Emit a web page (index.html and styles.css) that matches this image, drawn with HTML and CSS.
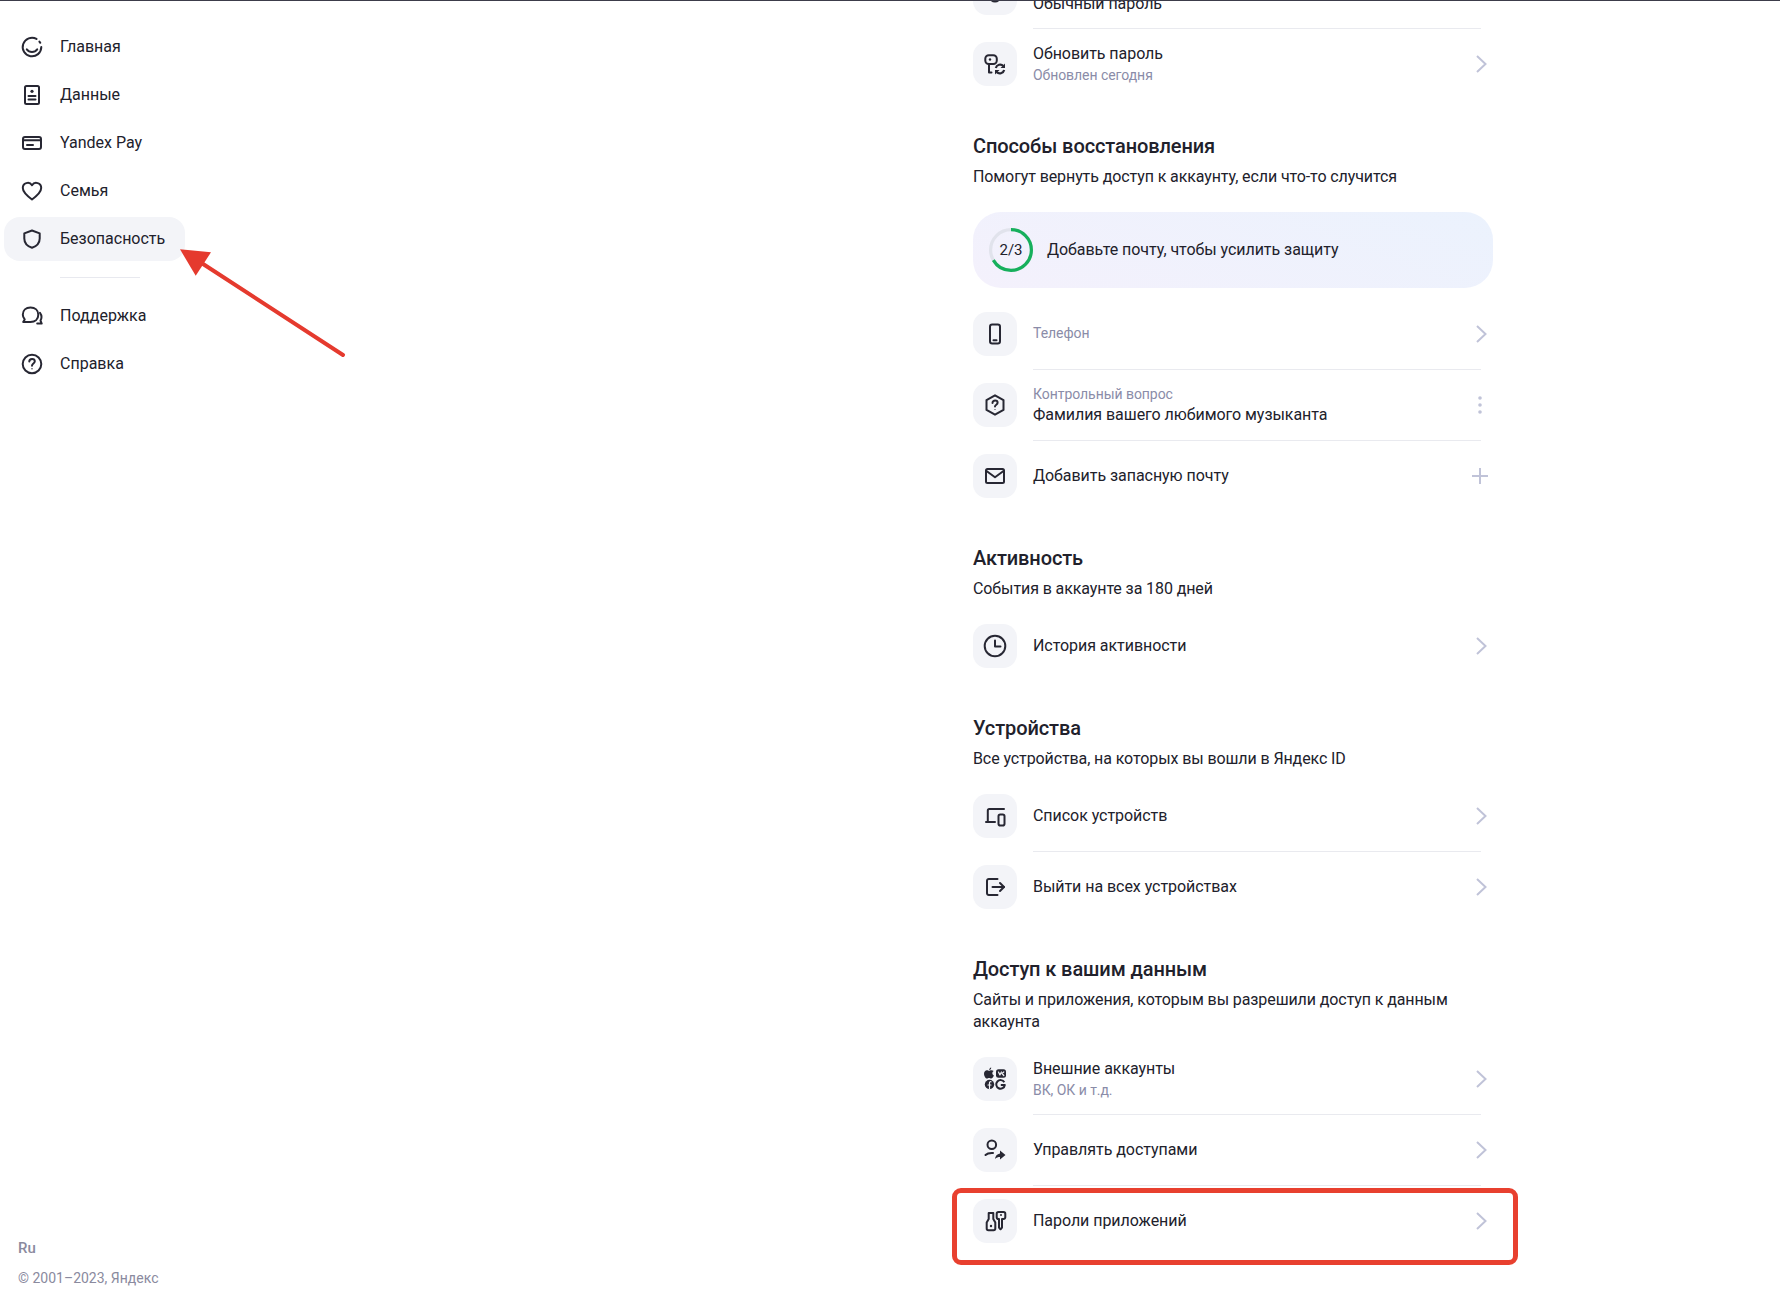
FILE: index.html
```html
<!DOCTYPE html>
<html lang="ru">

<head>
    <meta charset="UTF-8">
    <title>Безопасность</title>
    <link rel="stylesheet" href="styles.css">
</head>

<body>
    <div class="top-line"></div>
    <div class="layout">
        <aside class="sidebar">
            <nav class="nav">
                <a class="nav-item">
                    <svg class="icon" viewBox="0 0 24 24"><path d="M16.5 3.9A9.3 9.3 0 1 0 21.3 12"/><path d="M20.3 7.8l-.9-1.2"/><path d="M6.8 14.4c1.2 1.7 3.1 2.6 5.2 2.6s4-.9 5.2-2.6"/></svg>
                    Главная
                </a>
                <a class="nav-item">
                    <svg class="icon" viewBox="0 0 24 24"><rect x="5" y="3" width="14" height="18" rx="1.5"/><circle class="solid" cx="12" cy="8.3" r="1.6"/><path d="M8.5 13h7M8.5 16.5h7"/></svg>
                    Данные
                </a>
                <a class="nav-item">
                    <svg class="icon" viewBox="0 0 24 24"><rect x="3" y="6" width="18" height="12" rx="2"/><path d="M3 9.3h18"/><path d="M7 14h6"/></svg>
                    Yandex Pay
                </a>
                <a class="nav-item">
                    <svg class="icon" viewBox="0 0 24 24"><path d="M12 20.5C6 16 2.8 13 2.8 9a5 5 0 0 1 9.2-2.8A5 5 0 0 1 21.2 9c0 4-3.2 7-9.2 11.5z"/></svg>
                    Семья
                </a>
                <a class="nav-item active">
                    <svg class="icon" viewBox="0 0 24 24"><path d="M12 3.5l7.7 2.9v5.1c0 4.6-3.2 7.7-7.7 9.3-4.5-1.6-7.7-4.7-7.7-9.3V6.4z"/></svg>
                    Безопасность
                    <svg class="arrow" viewBox="0 0 170 110">
                        <path class="arrow-line" d="M22 15L165 108"/>
                        <path class="arrow-head" d="M2 2.3L33 5.3 17.7 28.7z"/>
                    </svg>
                </a>
                <div class="nav-sep"></div>
                <a class="nav-item">
                    <svg class="icon" viewBox="0 0 24 24"><path d="M10.5 3.5c4.6 0 7.8 3 7.8 7.3s-3.2 7.2-7.8 7.2H3.2l1.500-2.600C3.600 14 2.800 12.600 2.800 10.800c0-4.300 3.100-7.300 7.700-7.300z"/><path d="M20 8.800c1 1.300 1.500 2.700 1.500 4.300 0 1.400-.4 2.500-1 3.500l1.200 3h-4.500"/></svg>
                    Поддержка
                </a>
                <a class="nav-item">
                    <svg class="icon" viewBox="0 0 24 24"><circle cx="12" cy="12" r="9.3"/><path d="M9.3 9.6c0-1.600 1.200-2.700 2.800-2.700s2.700 1 2.700 2.400c0 2.200-2.800 2.200-2.800 4.400"/><circle class="solid" cx="12" cy="16.8" r=".7"/></svg>
                    Справка
                </a>
            </nav>
            <footer class="footer">
                <div class="lang">Ru</div>
                <div class="copy">© 2001–2023, Яндекс</div>
            </footer>
        </aside>

        <main class="main">
            <div class="rows">
                <div class="row">
                    <div class="tile"><svg class="icon" viewBox="0 0 24 24"><circle cx="12" cy="15" r="5.5"/></svg></div>
                    <div class="row-text low">
                        <div class="row-title">Обычный пароль</div>
                    </div>
                </div>
                <div class="sep"></div>
                <div class="row">
                    <div class="tile">
                        <svg class="icon" viewBox="0 0 24 24"><rect x="2.3" y="3.3" width="11.5" height="8.7" rx="3.5"/><path d="M6 12v8.5h2.5"/><circle class="solid" cx="7" cy="7.5" r="1.2"/><path class="thick" d="M12.8 16a4.5 4.5 0 0 1 7.600-2"/><path class="thick" d="M21.200 18a4.500 4.500 0 0 1-7.600 2"/><path class="solid" d="M22 11.500v4.500h-4.500zM12 22.500V18h4.500z"/></svg>
                    </div>
                    <div class="row-text">
                        <div class="row-title">Обновить пароль</div>
                        <div class="row-sub">Обновлен сегодня</div>
                    </div>
                    <svg class="action" viewBox="0 0 24 24"><path d="M9 4l8.5 8L9 20"/></svg>
                </div>
            </div>

            <section class="section">
                <h2>Способы восстановления</h2>
                <p class="section-sub">Помогут вернуть доступ к аккаунту, если что-то случится</p>
                <div class="banner">
                    <div class="ring">
                        <svg viewBox="0 0 44 44">
                            <circle class="ring-track" cx="22" cy="22" r="20.4"/>
                            <circle class="ring-value" cx="22" cy="22" r="20.4" pathLength="3" stroke-dasharray="2 1"/>
                        </svg>
                        <span>2/3</span>
                    </div>
                    <div class="banner-text">Добавьте почту, чтобы усилить защиту</div>
                </div>
                <div class="rows">
                    <div class="row">
                        <div class="tile"><svg class="icon" viewBox="0 0 24 24"><rect x="7" y="2.5" width="10" height="19" rx="2.2"/><path d="M10.5 18.2h3"/></svg></div>
                        <div class="row-text">
                            <div class="row-sub">Телефон</div>
                        </div>
                        <svg class="action" viewBox="0 0 24 24"><path d="M9 4l8.5 8L9 20"/></svg>
                    </div>
                    <div class="sep"></div>
                    <div class="row">
                        <div class="tile"><svg class="icon" viewBox="0 0 24 24"><path d="M12 2.3l8.500 4.800v9.800L12 21.700l-8.500-4.800V7.100z"/><path d="M9.500 10c0-1.400 1.100-2.400 2.600-2.400s2.500.9 2.500 2.200c0 1.900-2.600 1.900-2.600 3.800"/><circle class="solid" cx="12" cy="16.5" r=".6"/></svg></div>
                        <div class="row-text">
                            <div class="row-sub">Контрольный вопрос</div>
                            <div class="row-title">Фамилия вашего любимого музыканта</div>
                        </div>
                        <svg class="action dots" viewBox="0 0 24 24"><circle cx="12" cy="5" r="1.8"/><circle cx="12" cy="12" r="1.8"/><circle cx="12" cy="19" r="1.8"/></svg>
                    </div>
                    <div class="sep"></div>
                    <div class="row">
                        <div class="tile"><svg class="icon" viewBox="0 0 24 24"><rect x="3" y="5" width="18" height="14" rx="1.5"/><path d="M3.500 7l8.500 6.300L20.500 7"/></svg></div>
                        <div class="row-text">
                            <div class="row-title">Добавить запасную почту</div>
                        </div>
                        <svg class="action" viewBox="0 0 24 24"><path d="M12 4v16M4 12h16"/></svg>
                    </div>
                </div>
            </section>

            <section class="section">
                <h2>Активность</h2>
                <p class="section-sub">События в аккаунте за 180 дней</p>
                <div class="rows">
                    <div class="row">
                        <div class="tile"><svg class="icon" viewBox="0 0 24 24"><circle cx="12" cy="12" r="10.3"/><path d="M12 6.5V12.500h5.500"/></svg></div>
                        <div class="row-text">
                            <div class="row-title">История активности</div>
                        </div>
                        <svg class="action" viewBox="0 0 24 24"><path d="M9 4l8.5 8L9 20"/></svg>
                    </div>
                </div>
            </section>

            <section class="section">
                <h2>Устройства</h2>
                <p class="section-sub">Все устройства, на которых вы вошли в Яндекс ID</p>
                <div class="rows">
                    <div class="row">
                        <div class="tile"><svg class="icon" viewBox="0 0 24 24"><path d="M4.800 17.500V6.500a1.500 1.500 0 0 1 1.500-1.500H21"/><path d="M3 18h9"/><rect x="15.5" y="10.5" width="6" height="11" rx="1.8"/></svg></div>
                        <div class="row-text">
                            <div class="row-title">Список устройств</div>
                        </div>
                        <svg class="action" viewBox="0 0 24 24"><path d="M9 4l8.5 8L9 20"/></svg>
                    </div>
                    <div class="sep"></div>
                    <div class="row">
                        <div class="tile"><svg class="icon" viewBox="0 0 24 24"><path d="M14.500 4H5.800A1.800 1.800 0 0 0 4 5.800v12.400A1.800 1.800 0 0 0 5.800 20h8.700"/><path d="M9.500 12H21"/><path d="M17 8l4 4-4 4"/></svg></div>
                        <div class="row-text">
                            <div class="row-title">Выйти на всех устройствах</div>
                        </div>
                        <svg class="action" viewBox="0 0 24 24"><path d="M9 4l8.5 8L9 20"/></svg>
                    </div>
                </div>
            </section>

            <section class="section">
                <h2>Доступ к вашим данным</h2>
                <p class="section-sub">Сайты и приложения, которым вы разрешили доступ к данным аккаунта</p>
                <div class="rows">
                    <div class="row">
                        <div class="tile">
                            <svg class="icon" viewBox="0 0 24 24">
                                <path class="solid" d="M8.300 3.200c-1 0-1.500.6-2.200.6s-1.300-.6-2.200-.6C2.500 3.200 1 4.500 1 6.700c0 2.300 1.700 4.900 3 4.900.8 0 1.200-.5 2.100-.5s1.200.5 2.100.5c1.100 0 2.200-1.700 2.700-3.100-1.900-.8-2.100-3.500-.2-4.500-.5-.5-1.400-.8-2.400-.8zM6.200 2.900C6.100 1.700 7 .6 8.200.4c.1 1.200-.8 2.400-2 2.500z"/>
                                <rect class="solid" x="13" y="2.300" width="10" height="8.500" rx="2.500"/>
                                <path class="cutout" d="M15.500 5l1.400 3 1.500-3M20.800 5l-1.800 1.500 1.800 2"/>
                                <circle class="solid" cx="6.500" cy="17.500" r="4.700"/>
                                <path class="cutout" d="M8 14.800c-1-.3-1.500.2-1.500 1.200v6M5 18h3"/>
                                <path class="g-mark" d="M21.300 15.300a4.300 4.300 0 1 0 .5 2.700h-4"/>
                            </svg>
                        </div>
                        <div class="row-text">
                            <div class="row-title">Внешние аккаунты</div>
                            <div class="row-sub">ВК, ОК и т.д.</div>
                        </div>
                        <svg class="action" viewBox="0 0 24 24"><path d="M9 4l8.5 8L9 20"/></svg>
                    </div>
                    <div class="sep"></div>
                    <div class="row">
                        <div class="tile"><svg class="icon" viewBox="0 0 24 24"><circle cx="8.8" cy="6.8" r="4.3"/><path d="M2.500 17c1.500-1.500 4-2.200 7.500-2"/><path class="solid" d="M17 12.500l5.500 4.500-5.500 4.500V19c-2 0-3.500.5-5 2 .3-3 2-5 5-5.500z"/></svg></div>
                        <div class="row-text">
                            <div class="row-title">Управлять доступами</div>
                        </div>
                        <svg class="action" viewBox="0 0 24 24"><path d="M9 4l8.5 8L9 20"/></svg>
                    </div>
                    <div class="sep"></div>
                    <div class="row">
                        <div class="highlight"></div>
                        <div class="tile"><svg class="icon" viewBox="0 0 24 24"><path d="M5.700 4h4.600v6l2 3.500v6a1.700 1.700 0 0 1-1.700 1.700H5.400a1.700 1.700 0 0 1-1.700-1.700v-6l2-3.500z"/><circle class="solid" cx="8" cy="17" r="1.2"/><path d="M15.500 3h5a1.800 1.800 0 0 1 1.800 1.800v3.400A1.800 1.800 0 0 1 20.500 10H19v8.500l-1.500 1.800-1.500-1.800V10h-.5a1.800 1.800 0 0 1-1.800-1.800V4.800A1.800 1.800 0 0 1 15.500 3z"/><circle class="solid" cx="18" cy="6" r="1"/></svg></div>
                        <div class="row-text">
                            <div class="row-title">Пароли приложений</div>
                        </div>
                        <svg class="action" viewBox="0 0 24 24"><path d="M9 4l8.5 8L9 20"/></svg>
                    </div>
                </div>
            </section>
        </main>
    </div>
</body>

</html>
```

FILE: styles.css
```css
* {
    box-sizing: border-box;
}

body {
    margin: 0;
    height: 100vh;
    overflow: hidden;
    background: #fff;
    color: #21212b;
    font-family: Roboto, "Noto Sans", sans-serif;
    font-size: 16px;
    line-height: 22px;
}

.top-line {
    height: 1px;
    background: #3c3c4a;
}

.layout {
    display: flex;
    height: 1290px;
    overflow: hidden;
}

.icon {
    width: 24px;
    height: 24px;
    flex: none;
    fill: none;
    stroke: #272733;
    stroke-width: 2;
    stroke-linecap: round;
    stroke-linejoin: round;
}

.icon .solid {
    fill: #272733;
    stroke: none;
}

.icon .thick {
    stroke-width: 2.2;
    stroke-linecap: butt;
}

.icon .cutout {
    stroke: #f3f4f8;
    stroke-width: 1.2;
}

.icon .g-mark {
    stroke-width: 2;
    stroke-linecap: butt;
}

/* левая колонка */
.sidebar {
    width: 973px;
    flex: none;
    display: flex;
    flex-direction: column;
    padding: 24px 0 2px 4px;
}

.nav {
    display: flex;
    flex-direction: column;
    align-items: flex-start;
    gap: 4px;
}

.nav-item {
    position: relative;
    display: flex;
    align-items: center;
    gap: 16px;
    height: 44px;
    padding: 0 20px 0 16px;
    border-radius: 16px;
}

.nav-item.active {
    background: #f3f4f8;
}

.nav-sep {
    width: 80px;
    height: 1px;
    margin: 12px 0 12px 56px;
    background: #e8e9ef;
}

.arrow {
    position: absolute;
    left: 174px;
    top: 30px;
    width: 170px;
    height: 110px;
}

.arrow-line {
    stroke: #e53a2e;
    stroke-width: 4;
    stroke-linecap: round;
}

.arrow-head {
    fill: #e53a2e;
}

.footer {
    margin-top: auto;
    padding-left: 14px;
    color: #8a8a9e;
}

.lang {
    font-size: 15px;
    font-weight: 500;
    line-height: 20px;
    margin-bottom: 9px;
}

.copy {
    font-size: 14px;
}

/* правая колонка */
.main {
    width: 520px;
    flex: none;
    margin-top: -30px;
}

.section {
    margin-top: 48px;
}

h2 {
    margin: 0;
    font-size: 20px;
    font-weight: 500;
    line-height: 24px;
    letter-spacing: -0.1px;
}

.section-sub {
    margin: 8px 0 0;
    letter-spacing: -0.1px;
}

.section-sub + .rows {
    margin-top: 24px;
}

.banner {
    display: flex;
    align-items: center;
    gap: 14px;
    height: 76px;
    margin: 24px 0;
    padding-left: 16px;
    border-radius: 28px;
    background: linear-gradient(20deg, #f4f1fc, #ebf2fd);
}

.banner-text {
    letter-spacing: -0.05px;
}

.ring {
    position: relative;
    display: flex;
    align-items: center;
    justify-content: center;
    width: 44px;
    height: 44px;
    font-size: 15px;
}

.ring svg {
    position: absolute;
    inset: 0;
    transform: rotate(-90deg);
    fill: none;
    stroke-width: 3.2;
}

.ring-track {
    stroke: #e1e3ec;
}

.ring-value {
    stroke: #16b05c;
}

.row {
    position: relative;
    display: flex;
    align-items: center;
    gap: 16px;
    height: 44px;
}

.tile {
    display: flex;
    align-items: center;
    justify-content: center;
    width: 44px;
    height: 44px;
    flex: none;
    border-radius: 14px;
    background: #f3f4f8;
}

.row-text {
    flex: 1;
}

.row-text.low {
    padding-top: 22px;
}

.row-title {
    letter-spacing: -0.05px;
}

.row-sub {
    color: #8a8ca8;
    font-size: 14px;
    line-height: 20px;
    letter-spacing: -0.05px;
}

.row-sub:only-child {
    margin-bottom: 2px;
}

.action {
    width: 24px;
    height: 24px;
    flex: none;
    margin-right: 1px;
    fill: none;
    stroke: #c0c3d8;
    stroke-width: 2;
}

.action.dots {
    fill: #c0c3d8;
    stroke: none;
}

.sep {
    height: 1px;
    margin: 13px 12px 13px 60px;
    background: #e9eaef;
}

.highlight {
    position: absolute;
    left: -21px;
    top: -11px;
    width: 566px;
    height: 77px;
    border: 5px solid #e8402f;
    border-radius: 9px;
}
```
